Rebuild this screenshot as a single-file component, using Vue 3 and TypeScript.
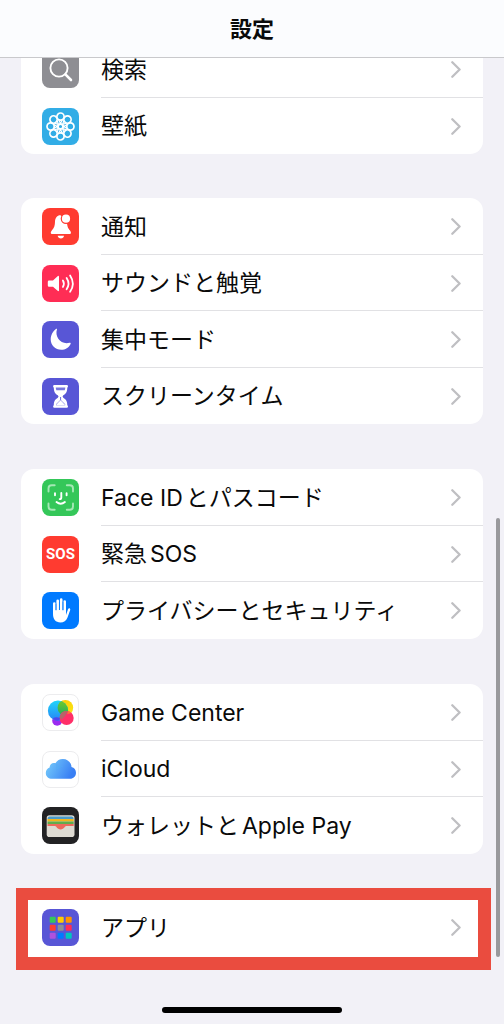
<script setup lang="ts">
type IconName =
  | 'search' | 'wallpaper' | 'bell' | 'sound' | 'moon' | 'hourglass'
  | 'face' | 'sos' | 'hand' | 'game' | 'cloud' | 'wallet' | 'apps'

interface Item {
  icon: IconName
  parts: string[]
}

interface Group {
  id: string
  items: Item[]
  highlighted?: boolean
}

const groups: Group[] = [
  {
    id: 'display',
    items: [
      { icon: 'search', parts: ['検索'] },
      { icon: 'wallpaper', parts: ['壁紙'] },
    ],
  },
  {
    id: 'alerts',
    items: [
      { icon: 'bell', parts: ['通知'] },
      { icon: 'sound', parts: ['サウンドと触覚'] },
      { icon: 'moon', parts: ['集中モード'] },
      { icon: 'hourglass', parts: ['スクリーンタイム'] },
    ],
  },
  {
    id: 'security',
    items: [
      { icon: 'face', parts: ['Face ID', 'とパスコード'] },
      { icon: 'sos', parts: ['緊急', 'SOS'] },
      { icon: 'hand', parts: ['プライバシーとセキュリティ'] },
    ],
  },
  {
    id: 'services',
    items: [
      { icon: 'game', parts: ['Game Center'] },
      { icon: 'cloud', parts: ['iCloud'] },
      { icon: 'wallet', parts: ['ウォレットと', 'Apple Pay'] },
    ],
  },
  { id: 'apps', highlighted: true, items: [{ icon: 'apps', parts: ['アプリ'] }] },
]

const petals = [0, 45, 90, 135, 180, 225, 270, 315]
const tiles = ['#34c759', '#ffcc00', '#ff9500', '#ff3b30', '#8e8e93', '#ff2d55', '#af52de', '#007aff', '#00c7be']
</script>

<template>
  <div class="screen">
    <header class="bar">
      <h1>設定</h1>
    </header>

    <main class="content">
      <ul v-for="group in groups" :key="group.id" class="group" :class="{ highlighted: group.highlighted }">
        <li v-for="item in group.items" :key="item.icon">
          <a href="#" class="row">
            <span class="icon" :class="item.icon" aria-hidden="true">
              <svg v-if="item.icon === 'search'" viewBox="0 0 37 37" fill="none" stroke="#fff" stroke-linecap="round">
                <circle cx="17" cy="17" r="8.6" stroke-width="1.9" />
                <path d="M23.4 23.4L29 29" stroke-width="2.6" />
              </svg>
              <svg v-else-if="item.icon === 'wallpaper'" viewBox="0 0 37 37" fill="none" stroke="#fff" stroke-width="1.7">
                <g v-for="angle in petals" :key="angle" :transform="`rotate(${angle} 18.5 18.5)`">
                  <circle cx="18.5" cy="8.6" r="3.6" />
                  <path d="M16.6 11.8L18.5 15.4L20.4 11.8" stroke-width="1.2" />
                </g>
                <circle cx="18.5" cy="18.5" r="2.6" stroke-width="2" />
              </svg>
              <svg v-else-if="item.icon === 'bell'" viewBox="0 0 37 37" fill="#fff">
                <path d="M18.5 7.2C15.4 7 13.2 9.6 13 13.6C12.8 18.5 12 20.2 9.8 22.5C8.4 24 8.4 26 10 26H27.8C29.4 26 29.3 24 28 22.5C25.9 20.3 25.2 18.4 24.8 13L18.5 7.2Z" />
                <circle cx="24" cy="10.7" r="5.3" fill="#ff3b30" />
                <circle cx="24" cy="10.7" r="4.1" />
                <path d="M15.7 27.7H22C21.7 29.5 20.5 30.5 18.9 30.5S16 29.5 15.7 27.7Z" />
              </svg>
              <svg v-else-if="item.icon === 'sound'" viewBox="0 0 37 37" fill="none" stroke="#fff" stroke-width="1.8" stroke-linecap="round">
                <path d="M7 15.5H11L15.6 11.2Q17 10.2 17 12V25.2Q17 27 15.6 25.8L11 21.8H7Q5.8 21.8 5.8 20.6V16.7Q5.8 15.5 7 15.5Z" fill="#fff" stroke="none" />
                <path d="M20.9 15.5Q22.9 18.7 20.9 21.9M24.6 13Q28.4 18.7 24.6 24.3M28.1 10.4Q33.6 18.7 28.1 26.8" />
              </svg>
              <svg v-else-if="item.icon === 'moon'" viewBox="0 0 37 37" fill="#fff">
                <path d="M15 8.3C12.4 15.9 19 24.1 27.5 21.8C28.3 21.6 29 22.1 28.6 22.9C26.9 26.6 23.3 28.8 19.2 28.8C13.3 28.8 8.7 24.3 8.7 18.5C8.7 14.1 11 10.2 14.2 7.8C14.8 7.4 15.2 7.8 15 8.3Z" />
              </svg>
              <svg v-else-if="item.icon === 'hourglass'" viewBox="0 0 37 37">
                <path d="M12.3 7H24.8Q26 7 26 8.2T25.3 9.4C25.3 14.4 23.5 15.7 21.3 17.3Q19.8 18.5 21.3 19.8C23.9 21.6 25.3 23 25.3 27.3Q26 27.8 26 28.5Q26 29.8 24.8 29.8H12.3Q11.1 29.8 11.1 28.5Q11.1 27.8 11.8 27.3C11.8 23 13.2 21.6 15.8 19.8Q17.3 18.5 15.8 17.3C13.6 15.7 11.8 14.4 11.8 9.4Q11.1 9.4 11.1 8.2T12.3 7Z" fill="#fff" />
                <path d="M13.8 9.4H23.3Q23.3 11 22.7 12.2H14.4Q13.8 11 13.8 9.4ZM18 19H19.1V22.2L23.2 26.2V27.2H14V26.2L18 22.2Z" fill="#5856d6" opacity=".8" />
                <path d="M14 27L18.5 22.2L23.2 27Z" fill="#fff" />
              </svg>
              <svg v-else-if="item.icon === 'face'" viewBox="0 0 37 37" fill="none" stroke="#fff" stroke-linecap="round">
                <path d="M6.5 12.5V9.5Q6.5 6.3 9.7 6.3H12.7M24.8 6.3H27.8Q31 6.3 31 9.5V12.5M31 24.5V27.5Q31 30.7 27.8 30.7H24.8M12.7 30.7H9.7Q6.5 30.7 6.5 27.5V24.5" stroke="#a5e8b5" stroke-width="1.9" />
                <path d="M13 14.3V16.3M24.6 14.3V16.3M19.3 14V18.5Q19.3 20.1 17.7 20.1M14.5 23.1Q18.7 26.6 22.9 23.1" stroke-width="1.9" />
              </svg>
              <span v-else-if="item.icon === 'sos'" class="sos-text">SOS</span>
              <svg v-else-if="item.icon === 'hand'" viewBox="0 0 37 37" fill="none" stroke="#fff" stroke-linecap="round" stroke-linejoin="round">
                <path d="M12.3 20V11.5M15.7 18V8.7M19.2 18V7.6M22.7 19V9.6" stroke-width="2.6" />
                <path d="M11 18H24V23L26 17.3C26.6 15.7 28.7 16.2 28.2 18L25.5 25.4C24.1 29 21.9 30.4 18.4 30.4C13.7 30.4 11 27.4 11 22Z" fill="#fff" stroke="none" />
                <path d="M14 12V18M17.45 10V17.5M20.95 10V18" stroke="#007aff" stroke-width="0.7" />
              </svg>
              <svg v-else-if="item.icon === 'game'" viewBox="0 0 37 37">
                <defs>
                  <linearGradient id="gc-blue" x1="0" y1="0" x2="0" y2="1"><stop stop-color="#20d5fa" /><stop offset="1" stop-color="#2784f5" /></linearGradient>
                  <linearGradient id="gc-yellow" x1="0" y1="0" x2="1" y2="1"><stop stop-color="#ffc400" /><stop offset="1" stop-color="#f7ea18" /></linearGradient>
                  <linearGradient id="gc-green" x1="0" y1="0" x2="0" y2="1"><stop stop-color="#78ca23" /><stop offset="1" stop-color="#1bae63" /></linearGradient>
                  <clipPath id="gc-left"><circle cx="16" cy="16.7" r="10.1" /></clipPath>
                </defs>
                <circle cx="15.2" cy="26.7" r="5" fill="#9b2bf0" />
                <circle cx="23.4" cy="13.8" r="7.8" fill="url(#gc-yellow)" />
                <circle cx="16" cy="16.7" r="10.1" fill="url(#gc-blue)" />
                <circle cx="23.4" cy="13.8" r="7.8" fill="url(#gc-green)" clip-path="url(#gc-left)" />
                <circle cx="24.6" cy="24" r="7.1" fill="#ff2f68" />
                <path d="M17.6 23A7.1 7.1 0 0 1 26 17.1Q24 22.2 19.2 25.8Z" fill="#b66468" />
                <path d="M26 17.1A7.1 7.1 0 0 1 29.6 19L25.2 20.2Z" fill="#ff713c" />
                <path d="M10.9 24.2Q14 22.5 17.8 24Q18.7 25.3 16 26.8Q12.7 26.7 10.9 24.2Z" fill="#5145ed" />
              </svg>
              <svg v-else-if="item.icon === 'cloud'" viewBox="0 0 37 37">
                <defs>
                  <linearGradient id="cloud-fill" x1="0" y1="0" x2="1" y2=".35"><stop stop-color="#79d0fb" /><stop offset="1" stop-color="#397ff4" /></linearGradient>
                </defs>
                <path d="M10.2 27.7C6.5 27.7 3.8 25.4 3.8 21.9C3.8 19 5.5 17.1 7.6 16.4C7.6 13.3 10.4 11.2 13.4 12.2C15 9.5 17.7 8 20.8 8C25.7 8 29.3 11.5 29.5 16C32.3 16.7 34 18.7 34 21.7C34 25.2 31.5 27.7 28 27.7Z" fill="url(#cloud-fill)" />
                <path d="M13.4 12.2Q16 13 17 15.4Q19.5 14.5 22 15.5Q17 16.3 14.6 19.8Q15 15.4 13.4 12.2Z" fill="#4faef5" opacity=".5" />
              </svg>
              <svg v-else-if="item.icon === 'wallet'" viewBox="0 0 37 37">
                <rect x="4.7" y="8.3" width="27.8" height="21.8" rx="2.8" fill="#dedbd3" />
                <path d="M5.5 11.9Q5.5 9.4 7.5 9.4H29.7Q31.7 9.4 31.7 11.9Z" fill="#4a9bc9" />
                <path d="M5.5 11.9H31.7V14.5H5.5Z" fill="#f2b51d" />
                <path d="M5.5 14.4H31.7V17.1H5.5Z" fill="#60ad4e" />
                <path d="M5.5 17H31.7V19.1H24.2C22.5 19.1 22.5 22.4 18.6 22.4S14.7 19.1 13 19.1H5.5Z" fill="#ee6a5c" />
              </svg>
              <svg v-else viewBox="0 0 37 37">
                <rect v-for="(color, i) in tiles" :key="color" :x="7.7 + (i % 3) * 8" :y="7.8 + Math.floor(i / 3) * 8" width="6" height="6" rx="1" :fill="color" />
              </svg>
            </span>
            <span class="label"><span v-for="part in item.parts" :key="part">{{ part }}</span></span>
            <svg class="chevron" viewBox="0 0 10 17" aria-hidden="true">
              <path d="M1.3 1.3L8.6 8.5L1.3 15.7" fill="none" stroke="#bfbfc2" stroke-width="2.3" stroke-linecap="round" stroke-linejoin="round" />
            </svg>
          </a>
        </li>
      </ul>
    </main>

    <div class="scrollbar" aria-hidden="true"></div>
    <div class="home" aria-hidden="true"></div>
  </div>
</template>

<style>
body {
  background: #f2f1f7;
}
</style>

<style scoped>
.screen {
  position: relative;
  display: flex;
  flex-direction: column;
  box-sizing: border-box;
  min-height: 100vh;
  padding-bottom: 11px;
  background: #f2f1f7;
  color: #0a0a0a;
  font-family: Inter, "Noto Sans CJK JP", sans-serif;
}

.bar {
  display: flex;
  align-items: center;
  justify-content: center;
  height: 57px;
  border-bottom: 1px solid #c9c9cc;
  background: #fbfcfe;
}

h1 {
  margin: 0;
  font-size: 22px;
  line-height: 32px;
  font-weight: 700;
}

.content {
  display: flex;
  flex-direction: column;
  gap: 45px;
  overflow: hidden;
}

.group {
  margin: 0 21px;
  padding: 0;
  list-style: none;
  border-radius: 13px;
  background: #fff;
}

/* The list is scrolled part of the way under the title bar. */
.group:first-child {
  margin-top: -17px;
  margin-bottom: -1px;
}

.row {
  position: relative;
  display: flex;
  align-items: center;
  gap: 22px;
  box-sizing: border-box;
  min-height: 56px;
  padding: 0 22px 0 21px;
  color: inherit;
  text-decoration: none;
}

li:nth-child(odd) .row {
  min-height: 57px;
}

li:not(:last-child) .row::after {
  content: "";
  position: absolute;
  right: 0;
  bottom: 0;
  left: 80px;
  height: 1px;
  background: #e1e1e4;
}

.highlighted {
  margin: -11px 13px 0 16px;
  border: solid #ea4c3f;
  border-width: 12px 13px 13px 12px;
  border-radius: 0;
}

.highlighted .row {
  padding: 0 17px 2px 14px;
}

.icon {
  display: flex;
  flex: none;
  align-items: center;
  justify-content: center;
  box-sizing: border-box;
  width: 37px;
  height: 37px;
  border-radius: 8px;
  overflow: hidden;
}

.icon svg {
  display: block;
  flex: none;
  width: 37px;
  height: 37px;
}

.search { background: #8e8e93; }
.wallpaper { background: #32ade6; }
.bell, .sos { background: #ff3b30; }
.sound { background: #ff2d55; }
.moon, .hourglass, .apps { background: #5856d6; }
.face { background: #34c759; }
.hand { background: #007aff; }
.game, .cloud { border: 1px solid #ececee; background: #fff; }
.wallet { background: #222224; }

.sos-text {
  color: #fff;
  font-family: Roboto, sans-serif;
  font-size: 15px;
  line-height: 20px;
  font-weight: 700;
}

.label {
  display: flex;
  flex: 1;
  gap: 3px;
  font-size: 23px;
  line-height: 34px;
  white-space: nowrap;
}

.chevron {
  flex: none;
  width: 10px;
  height: 17px;
}

.scrollbar {
  position: absolute;
  top: 518px;
  right: 4px;
  bottom: 67px;
  width: 4px;
  border-radius: 2px;
  background: #99999c;
}

.home {
  align-self: center;
  width: 180px;
  height: 6px;
  margin-top: auto;
  border-radius: 3px;
  background: #000;
}
</style>
